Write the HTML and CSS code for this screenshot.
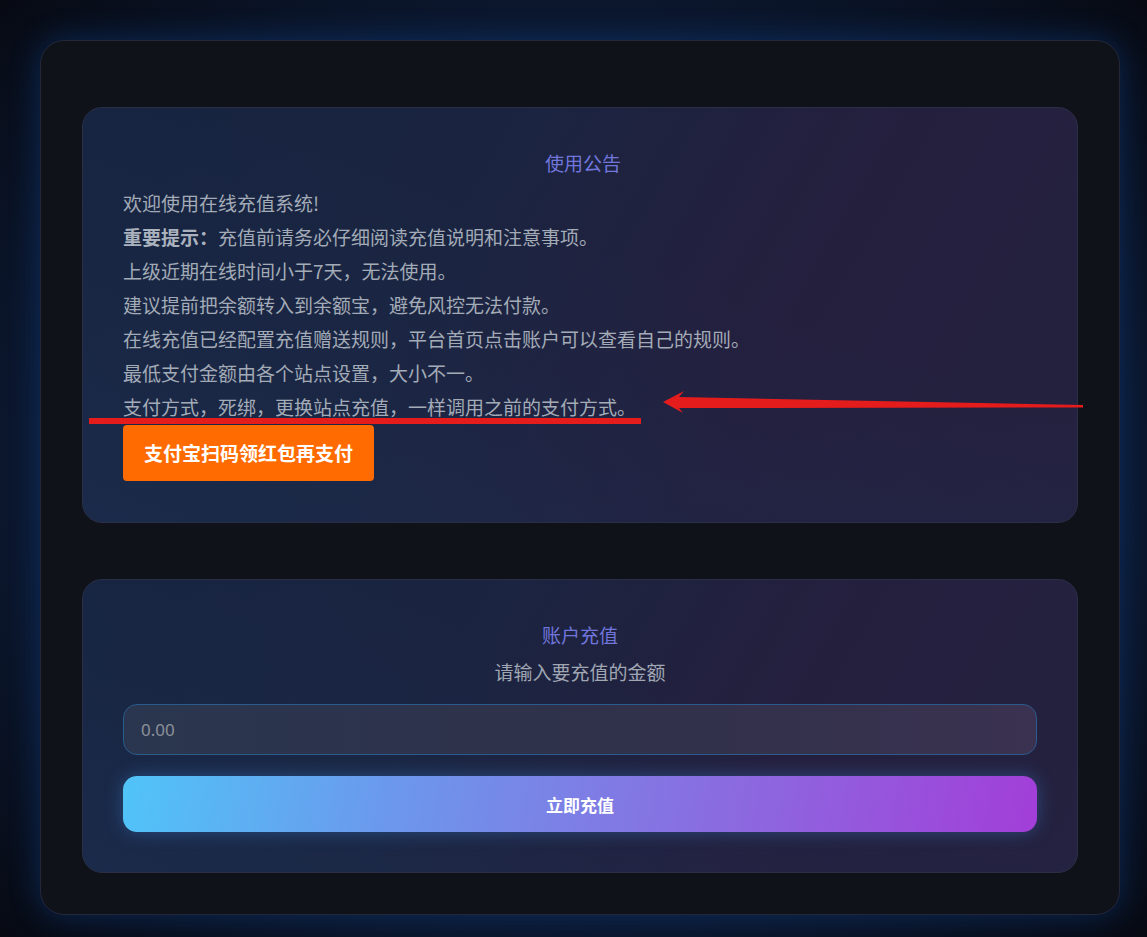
FILE: index.html
```html
<!DOCTYPE html>
<html lang="zh-CN">
<head>
    <meta charset="UTF-8">
    <title>在线充值</title>
    <link rel="stylesheet" href="styles.css">
</head>
<body>

    <div class="wrap">

        <div class="card notice">
            <h3 class="card-title">使用公告</h3>
            <div class="notice-text">
                <p>欢迎使用在线充值系统!</p>
                <p><strong>重要提示：</strong>充值前请务必仔细阅读充值说明和注意事项。</p>
                <p>上级近期在线时间小于7天，无法使用。</p>
                <p>建议提前把余额转入到余额宝，避免风控无法付款。</p>
                <p>在线充值已经配置充值赠送规则，平台首页点击账户可以查看自己的规则。</p>
                <p>最低支付金额由各个站点设置，大小不一。</p>
                <p>支付方式，死绑，更换站点充值，一样调用之前的支付方式。</p>
            </div>
            <a class="btn-alipay" href="#">支付宝扫码领红包再支付</a>
        </div>

        <div class="card recharge">
            <h3 class="card-title">账户充值</h3>
            <p class="card-sub">请输入要充值的金额</p>
            <input class="amount" type="text" placeholder="0.00">
            <button class="btn-pay" type="button">立即充值</button>
        </div>

    </div>

    <!-- annotation marks over the screenshot -->
    <svg class="marks" width="1147" height="937" viewBox="0 0 1147 937">
        <rect x="89" y="418" width="552" height="6" fill="#e41c1c"/>
        <polygon points="663,402 684,391 679,397 1083,405 1083,407.5 679,408 683,413" fill="#e41c1c"/>
    </svg>

</body>
</html>
```

FILE: styles.css
```css
* {
    box-sizing: border-box;
}

html, body {
    margin: 0;
    padding: 0;
}

body {
    padding: 40px 27px 22px 40px;
    background: #080c16;
    background-image: radial-gradient(ellipse at center, #0d1d3a 55%, #070a13 100%);
    font-family: "Noto Sans CJK SC", "Noto Sans", sans-serif;
    color: #a3abb7;
    position: relative;
}

.wrap {
    width: 1080px;
    padding: 66px 41px 41px;
    background: #10121a;
    border: 1px solid #23273a;
    border-radius: 24px;
    box-shadow: 0 0 30px rgba(16, 70, 150, 0.45);
    display: flex;
    flex-direction: column;
    gap: 56px;
}

.card {
    border: 1px solid #2a2f47;
    border-radius: 20px;
    padding: 40px;
    background: linear-gradient(120deg, #162440 0%, #1a2440 35%, #251f3e 68%, #242240 100%);
    position: relative;
    overflow: hidden;
}

.notice {
    padding-bottom: 41px;
}

.card::before {
    content: "";
    position: absolute;
    left: 0;
    right: 0;
    top: 0;
    bottom: 0;
    background: linear-gradient(20deg, rgba(28, 45, 78, 0.7) 0%, rgba(28, 45, 78, 0.3) 30%, rgba(28, 45, 78, 0) 60%);
    pointer-events: none;
}

.card > * {
    position: relative;
}

.card-title {
    margin: 0;
    font-size: 19px;
    font-weight: normal;
    line-height: 30px;
    text-align: center;
    color: #7176dd;
}

.notice .card-title {
    margin-bottom: 8px;
    padding-left: 6px;
}

.notice-text p {
    margin: 0;
    font-size: 19px;
    line-height: 34px;
}

.notice-text strong {
    color: #aab2be;
}

.btn-alipay {
    display: inline-block;
    margin-top: 1px;
    height: 56px;
    line-height: 56px;
    padding: 0 21px;
    background: #ff6b00;
    color: #fff;
    font-size: 19px;
    font-weight: bold;
    text-decoration: none;
    border-radius: 4px;
    vertical-align: top;
}

.card-sub {
    margin: 7px 0 0;
    font-size: 19px;
    line-height: 30px;
    text-align: center;
    color: #a0a7b3;
}

.amount {
    display: block;
    width: 100%;
    height: 51px;
    margin-top: 17px;
    padding: 0 17px;
    border: 1px solid #2b5b8c;
    border-radius: 14px;
    background: linear-gradient(90deg, #2a364f 0%, #30314a 55%, #3a3250 100%);
    font-family: "Noto Sans", sans-serif;
    font-size: 17px;
    color: #c8ccd4;
    outline: none;
}

.amount::placeholder {
    color: #8c919b;
}

.btn-pay {
    display: block;
    width: 100%;
    height: 56px;
    margin-top: 21px;
    border: none;
    border-radius: 14px;
    background: linear-gradient(100deg, #50c4f8 0%, #6c97ec 30%, #8a6ce0 65%, #a23ed8 100%);
    box-shadow: 0 0 18px rgba(70, 150, 240, 0.35);
    color: #fff;
    font-family: "Noto Sans CJK SC", sans-serif;
    font-size: 17px;
    font-weight: bold;
    cursor: pointer;
}

.marks {
    position: absolute;
    left: 0;
    top: 0;
    pointer-events: none;
}
```
